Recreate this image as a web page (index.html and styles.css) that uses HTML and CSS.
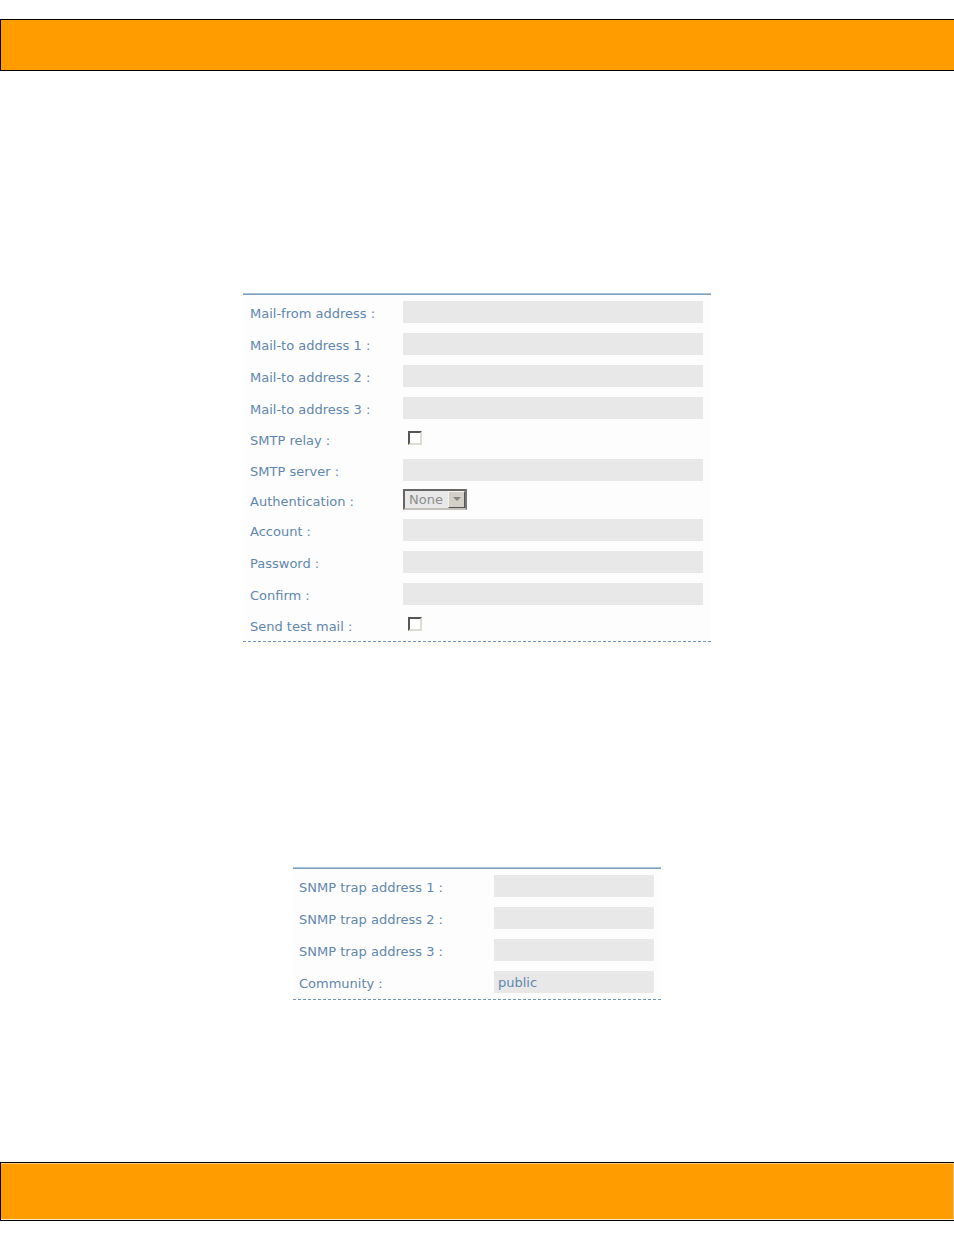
FILE: index.html
```
<!DOCTYPE html>
<html lang="en">
  <head>
    <meta charset="utf-8">
    <title>Notification settings</title>
    <link rel="stylesheet" href="styles.css">
  </head>
  <body>
    <header class="bar"></header>
    <main>
      <form class="panel mail">
        <div class="row">
          <label for="mail-from">Mail-from address :</label>
          <input type="text" id="mail-from">
        </div>
        <div class="row">
          <label for="mail-to1">Mail-to address 1 :</label>
          <input type="text" id="mail-to1">
        </div>
        <div class="row">
          <label for="mail-to2">Mail-to address 2 :</label>
          <input type="text" id="mail-to2">
        </div>
        <div class="row">
          <label for="mail-to3">Mail-to address 3 :</label>
          <input type="text" id="mail-to3">
        </div>
        <div class="row check">
          <label for="relay">SMTP relay :</label>
          <input type="checkbox" id="relay">
        </div>
        <div class="row">
          <label for="server">SMTP server :</label>
          <input type="text" id="server" disabled>
        </div>
        <div class="row choice">
          <label for="auth">Authentication :</label>
          <div class="select">
            <select id="auth" disabled>
              <option>None</option>
            </select>
            <span class="arrow"></span>
          </div>
        </div>
        <div class="row">
          <label for="account">Account :</label>
          <input type="text" id="account" disabled>
        </div>
        <div class="row">
          <label for="password">Password :</label>
          <input type="password" id="password" disabled>
        </div>
        <div class="row">
          <label for="confirm">Confirm :</label>
          <input type="password" id="confirm" disabled>
        </div>
        <div class="row check">
          <label for="test">Send test mail :</label>
          <input type="checkbox" id="test">
        </div>
      </form>

      <form class="panel snmp">
        <div class="row">
          <label for="trap1">SNMP trap address 1 :</label>
          <input type="text" id="trap1">
        </div>
        <div class="row">
          <label for="trap2">SNMP trap address 2 :</label>
          <input type="text" id="trap2">
        </div>
        <div class="row">
          <label for="trap3">SNMP trap address 3 :</label>
          <input type="text" id="trap3">
        </div>
        <div class="row">
          <label for="community">Community :</label>
          <input type="text" id="community" value="public">
        </div>
      </form>
    </main>
    <footer class="bar bottom"></footer>
  </body>
</html>
```
FILE: styles.css
```
* {
  box-sizing: border-box;
}

body {
  margin: 0;
  padding: 19px 0 14px;
  background-color: #fff;
  color: #5f87af;
  font-family: "DejaVu Sans", Verdana, sans-serif;
  font-size: 13px;
}

.bar {
  height: 52px;
  background-color: #ff9c00;
  border: 1px solid #000;
  border-right: none;
}

.bar.bottom {
  height: 59px;
  box-shadow: inset 0 1px #ffc878, inset 0 -1px #ffe8c4, inset -1px 0 #ffc878;
}

main {
  display: flex;
  flex-direction: column;
  align-items: center;
  gap: 225px;
  padding: 222px 0 162px;
}

.panel {
  width: 100%;
  padding: 2px 8px 1px 7px;
  background-color: #fdfdfd;
  border-top: 1px solid #a9c3d9;
  border-bottom: 1px dashed #6f97bb;
  box-shadow: inset 0 1px #7f9fbe;
}

.mail {
  max-width: 468px;
}

.snmp {
  max-width: 368px;
  padding: 2px 7px 1px 6px;
}

.row {
  display: grid;
  grid-template-columns: 153px 1fr;
  align-items: center;
  height: 32px;
}

.snmp .row {
  grid-template-columns: 195px 1fr;
}

.row.check {
  height: 30px;
}

.row.choice {
  height: 28px;
}

label {
  padding-top: 4px;
  line-height: 16px;
}

input[type="text"],
input[type="password"] {
  width: 100%;
  height: 22px;
  margin: 0;
  padding: 0 4px;
  border: none;
  background-color: #e8e8e8;
  color: #5f87af;
  font: inherit;
}

input[type="checkbox"] {
  appearance: none;
  width: 14px;
  height: 14px;
  margin: 0 5px 2px;
  background-color: #fff;
  border: 2px solid;
  border-color: #555 #dedbd4 #dedbd4 #555;
}

.select {
  position: relative;
  width: 64px;
  height: 21px;
  margin-bottom: 2px;
}

select {
  appearance: none;
  width: 100%;
  height: 100%;
  margin: 0;
  padding: 0 4px;
  background-color: #e8e8e8;
  border: 2px solid;
  border-color: #666 #777 #c4c1ba #666;
  border-radius: 0;
  color: #8c8c8c;
  font: inherit;
  opacity: 1;
}

.arrow {
  position: absolute;
  top: 2px;
  right: 2px;
  display: flex;
  align-items: center;
  justify-content: center;
  width: 17px;
  height: 17px;
  background-color: #d4d0c8;
  border: 1px solid;
  border-color: #f4f2ee #555 #555 #f4f2ee;
  pointer-events: none;
}

.arrow::before {
  content: "";
  border: 4px solid transparent;
  border-top-color: #858585;
  border-bottom: none;
}
```
